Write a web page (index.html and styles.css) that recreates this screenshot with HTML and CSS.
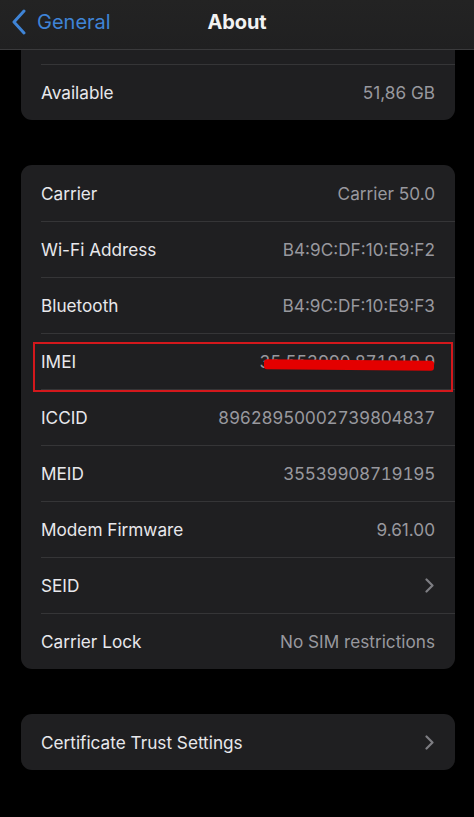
FILE: index.html
```html
<!DOCTYPE html>
<html lang="en">
<head>
<meta charset="utf-8">
<title>About</title>
<link rel="stylesheet" href="styles.css">
</head>
<body>
<div class="screen">
  <header class="nav">
    <div class="back">
      <svg class="back-chevron" viewBox="0 0 16 26" width="16" height="26"><path d="M13 2 L3 13 L13 24" fill="none" stroke="currentColor" stroke-width="3" stroke-linecap="round" stroke-linejoin="round"/></svg>
      <span>General</span>
    </div>
    <h1 class="title">About</h1>
  </header>
  <main class="content">
    <section class="card card-top">
      <div class="row row-hidden"></div>
      <div class="row"><span class="label">Available</span><span class="value">51,86 GB</span></div>
    </section>

    <section class="card">
      <div class="row"><span class="label">Carrier</span><span class="value">Carrier 50.0</span></div>
      <div class="row"><span class="label">Wi-Fi Address</span><span class="value">B4:9C:DF:10:E9:F2</span></div>
      <div class="row"><span class="label">Bluetooth</span><span class="value">B4:9C:DF:10:E9:F3</span></div>
      <div class="row row-imei">
        <span class="label">IMEI</span>
        <span class="value num redacted">35 553990 871919 9</span>
        <span class="highlight"></span>
      </div>
      <div class="row"><span class="label">ICCID</span><span class="value num">89628950002739804837</span></div>
      <div class="row"><span class="label">MEID</span><span class="value num">35539908719195</span></div>
      <div class="row"><span class="label">Modem Firmware</span><span class="value">9.61.00</span></div>
      <div class="row"><span class="label">SEID</span>
        <svg class="chev" viewBox="0 0 9 15" width="9" height="15"><path d="M1.5 1.5 L7.5 7.5 L1.5 13.5" fill="none" stroke="currentColor" stroke-width="2.2" stroke-linecap="round" stroke-linejoin="round"/></svg>
      </div>
      <div class="row"><span class="label">Carrier Lock</span><span class="value">No SIM restrictions</span></div>
    </section>

    <section class="card">
      <div class="row"><span class="label">Certificate Trust Settings</span>
        <svg class="chev" viewBox="0 0 9 15" width="9" height="15"><path d="M1.5 1.5 L7.5 7.5 L1.5 13.5" fill="none" stroke="currentColor" stroke-width="2.2" stroke-linecap="round" stroke-linejoin="round"/></svg>
      </div>
    </section>
  </main>
</div>
</body>
</html>
```

FILE: styles.css
```css
* { box-sizing: border-box; margin: 0; padding: 0; }

html, body {
  background: #000;
  width: 474px;
  height: 817px;
  overflow: hidden;
}

body {
  font-family: "Inter", "Roboto", "Liberation Sans", sans-serif;
  font-size: 17.2px;
  color: #ebebf0;
}

.screen {
  height: 817px;
  overflow: hidden;
  position: relative;
}

.nav {
  position: relative;
  z-index: 2;
  height: 50px;
  display: flex;
  align-items: center;
  justify-content: center;
  background: linear-gradient(180deg, #232323 0%, #202021 100%);
  border-bottom: 1px solid #3a3a3c;
}

.back {
  position: absolute;
  left: 11px;
  top: 9px;
  display: flex;
  align-items: center;
  gap: 10px;
  color: #3f84d6;
  font-size: 20px;
}

.back-chevron { display: block; }

.title {
  font-size: 20px;
  font-weight: 700;
  color: #f2f2f2;
  letter-spacing: -0.1px;
  margin-top: -5px;
}

.content {
  padding: 0 19px 0 21px;
  display: flex;
  flex-direction: column;
  gap: 45px;
}

.card {
  background: #1f1f21;
  border-radius: 11px;
  overflow: hidden;
}

.card-top {
  margin-top: -42px;
}

.row {
  position: relative;
  height: 56px;
  display: flex;
  align-items: center;
  justify-content: space-between;
  padding: 1px 20px 0;
}

.row + .row::before {
  content: "";
  position: absolute;
  top: 0;
  left: 20px;
  right: 0;
  height: 1px;
  background: #353537;
}

.label { color: #e8e8ec; }
.value { color: #98989e; }
.num { font-variant-numeric: tabular-nums; letter-spacing: -0.3px; }

.chev { color: #7d7d82; display: block; margin-right: 1px; }

.redacted { position: relative; }

.redacted::after {
  content: "";
  position: absolute;
  left: 5px;
  right: 1px;
  top: 9px;
  height: 10px;
  background: #e40000;
  border-radius: 3px;
  transform: rotate(0.5deg);
}

.highlight {
  position: absolute;
  left: 12px;
  right: 2px;
  top: 9px;
  bottom: -3px;
  border: 2px solid #d3181c;
  pointer-events: none;
  z-index: 1;
}
```
